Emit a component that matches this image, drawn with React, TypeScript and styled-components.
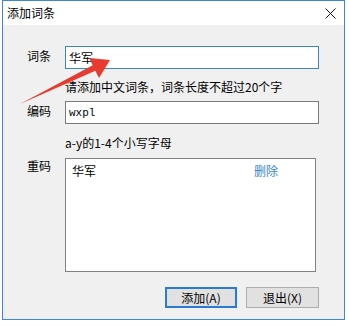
import React from 'react';
import styled, { createGlobalStyle } from 'styled-components';

const GlobalStyle = createGlobalStyle`
  html, body {
    margin: 0;
    padding: 0;
    background: #ffffff;
  }
  body {
    font-family: "Noto Sans CJK SC", "Liberation Sans", sans-serif;
    font-size: 12px;
    color: #000000;
    overflow: hidden;
  }
`;

const Page = styled.div`
  position: relative;
  width: 348px;
  height: 326px;
  overflow: hidden;
`;

const Window = styled.div`
  box-sizing: border-box;
  width: 343px;
  height: 320px;
  margin-left: 2px;
  border: 1px solid #3b88d6;
  display: flex;
  flex-direction: column;
  background: #f0f0f0;
`;

const TitleBar = styled.div`
  height: 24px;
  background: #ffffff;
  display: flex;
  align-items: center;
  justify-content: space-between;
  padding: 0 8px 0 4px;
`;

const Title = styled.span`
  font-size: 12px;
  line-height: 16px;
  color: #000;
`;

const CloseIcon = styled.svg`
  width: 11px;
  height: 11px;
  display: block;
`;

const Body = styled.div`
  flex: 1;
  padding: 21px 0 0 24px;
  display: grid;
  grid-template-columns: 38px 254px;
  align-content: start;
`;

const Label = styled.div<{ $top?: number }>`
  font-size: 12px;
  line-height: 18px;
  padding-top: ${p => p.$top ?? 0}px;
  color: #000;
`;

const TextBox = styled.div<{ $focused?: boolean; $mono?: boolean; $mt?: number }>`
  box-sizing: border-box;
  height: 23px;
  margin-top: ${p => p.$mt ?? 0}px;
  background: #ffffff;
  border: 1px solid ${p => (p.$focused ? '#3c86c8' : '#7a7a7a')};
  padding: 0 3px;
  display: flex;
  align-items: center;
  font-family: ${p => (p.$mono ? '"Liberation Mono", monospace' : '"Noto Sans CJK SC", sans-serif')};
  font-size: ${p => (p.$mono ? '11px' : '12px')};
  color: #000;
`;

const Hint = styled.div<{ $mt: number }>`
  grid-column: 2;
  margin-top: ${p => p.$mt}px;
  font-size: 12px;
  line-height: 18px;
  color: #000;
`;

const ListBox = styled.div`
  box-sizing: border-box;
  width: 251px;
  height: 114px;
  margin-top: 6px;
  background: #ffffff;
  border: 1px solid #828282;
  padding: 3px 37px 0 6px;
`;

const ListRow = styled.div`
  display: flex;
  justify-content: space-between;
  line-height: 18px;
  font-size: 12px;
`;

const LinkText = styled.span`
  color: #3a87c9;
`;

const Buttons = styled.div`
  grid-column: 2;
  margin-top: 15px;
  display: flex;
  justify-content: flex-end;
  gap: 9px;
`;

const Button = styled.div<{ $primary?: boolean }>`
  box-sizing: border-box;
  width: ${p => (p.$primary ? 72 : 73)}px;
  height: 21px;
  background: #e1e1e1;
  border: ${p => (p.$primary ? '2px solid #2a7ad2' : '1px solid #adadad')};
  display: flex;
  align-items: center;
  justify-content: center;
  font-size: 12px;
  color: #000;
`;

const Overlay = styled.svg`
  position: absolute;
  left: 0;
  top: 0;
  width: 348px;
  height: 326px;
  pointer-events: none;
`;

export default function App() {
  return (
    <>
      <GlobalStyle />
      <Page>
        <Window>
          <TitleBar>
            <Title>添加词条</Title>
            <CloseIcon viewBox="0 0 11 11">
              <path d="M0.5 0.5 L10.5 10.5 M10.5 0.5 L0.5 10.5" stroke="#111" strokeWidth="1" fill="none" />
            </CloseIcon>
          </TitleBar>
          <Body>
            <Label $top={1}>词条</Label>
            <TextBox $focused>华军</TextBox>
            <Hint $mt={9}>请添加中文词条，词条长度不超过20个字</Hint>
            <Label $top={6}>编码</Label>
            <TextBox $mono $mt={5}>wxpl</TextBox>
            <Hint $mt={10}>a-y的1-4个小写字母</Hint>
            <Label $top={5}>重码</Label>
            <ListBox>
              <ListRow>
                <span>华军</span>
                <LinkText>删除</LinkText>
              </ListRow>
            </ListBox>
            <Buttons>
              <Button $primary>添加(A)</Button>
              <Button>退出(X)</Button>
            </Buttons>
          </Body>
        </Window>
        <Overlay viewBox="0 0 348 326">
          <polygon
            points="20,104 92.7,65.3 89,58 110,60 99,78 95.3,70.7"
            fill="#e63b2e"
          />
        </Overlay>
      </Page>
    </>
  );
}
